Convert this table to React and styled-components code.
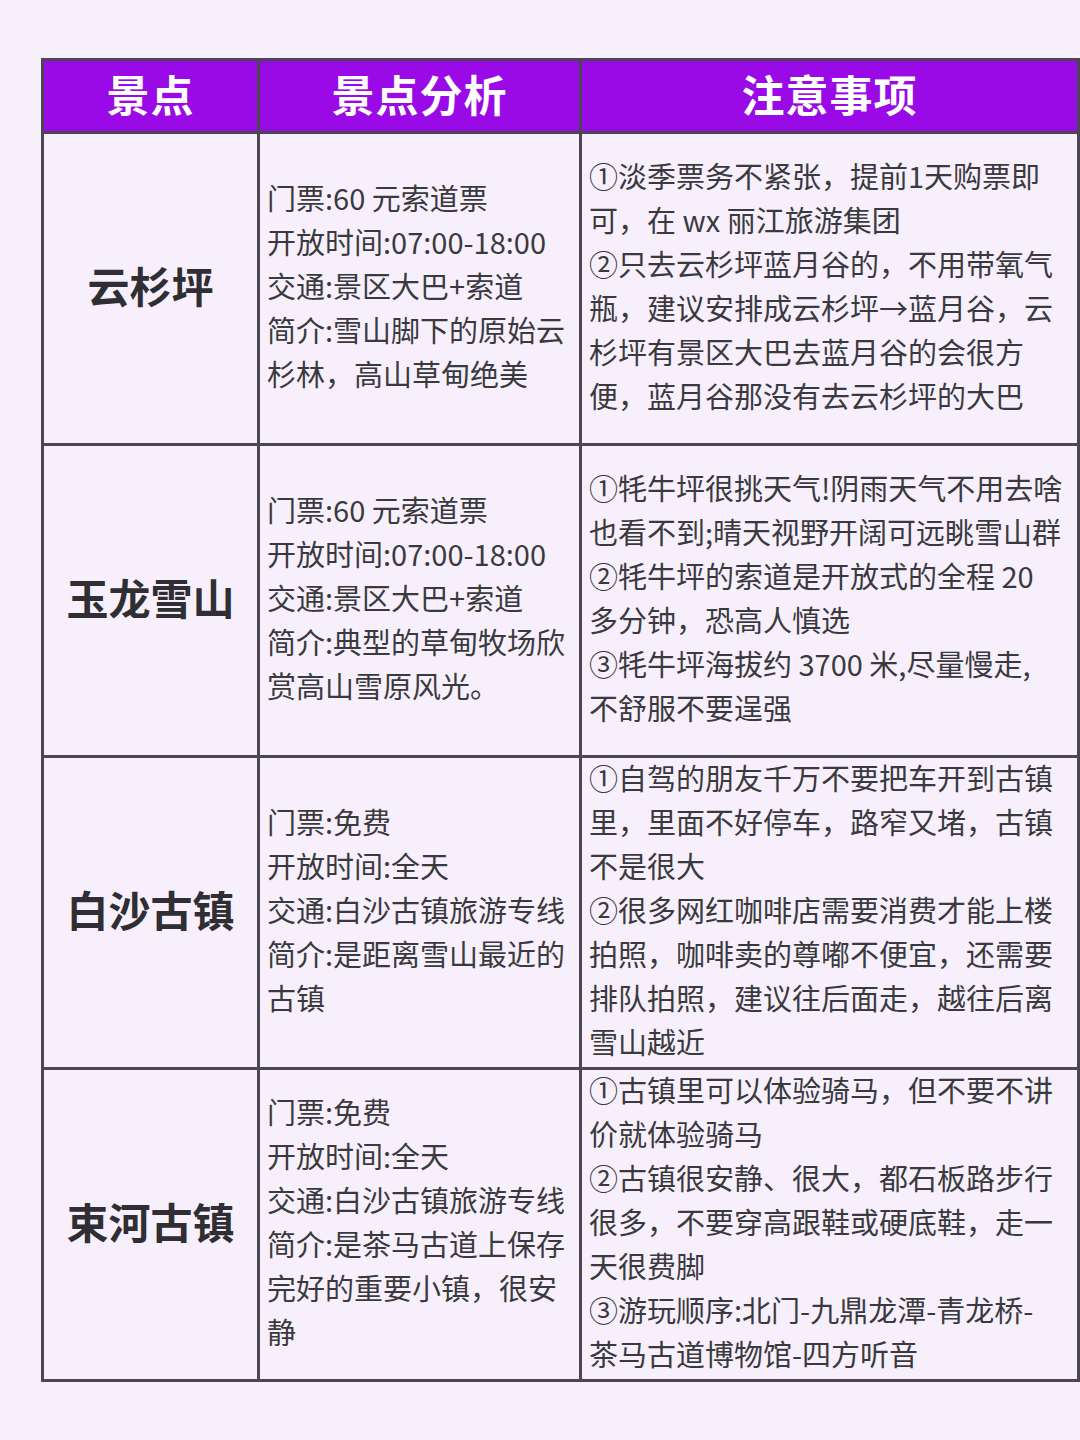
import React from "react";
import styled, { createGlobalStyle } from "styled-components";

const Global = createGlobalStyle`
  html, body { margin: 0; padding: 0; background: #f7f0fc; }
  body { font-family: "Noto Sans CJK SC", "Noto Sans", sans-serif; }
`;

const Page = styled.div`
  min-height: 1440px;
  padding: 58px 0 0 41px;
  box-sizing: border-box;
`;

const Table = styled.div`
  display: grid;
  grid-template-columns: 213px 319px 495px;
  grid-template-rows: 70px repeat(4, 309px);
  gap: 3px;
  padding: 3px;
  width: 1039px;
  box-sizing: border-box;
  background: #4b4652;
`;

const HeadCell = styled.div`
  background: #990ae6;
  color: #ffffff;
  font-size: 43px;
  font-weight: 700;
  display: flex;
  align-items: center;
  justify-content: center;
  letter-spacing: 1px;
  padding-bottom: 6px;
  box-sizing: border-box;
`;

const NameCell = styled.div`
  background: #f7f0fc;
  color: #2f2f33;
  font-size: 42px;
  font-weight: 700;
  display: flex;
  align-items: center;
  justify-content: center;
  padding-bottom: 8px;
  box-sizing: border-box;
`;

const TextCell = styled.div`
  background: #f7f0fc;
  color: #3a3a3e;
  font-size: 29px;
  line-height: 44px;
  display: flex;
  flex-direction: column;
  justify-content: center;
  padding: 0 0 8px 7px;
  box-sizing: border-box;
`;

const Line = styled.span`
  display: block;
  white-space: nowrap;
`;

const rows = [
  {
    name: "云杉坪",
    info: [
      "门票:60 元索道票",
      "开放时间:07:00-18:00",
      "交通:景区大巴+索道",
      "简介:雪山脚下的原始云",
      "杉林，高山草甸绝美",
    ],
    notes: [
      "①淡季票务不紧张，提前1天购票即",
      "可，在 wx 丽江旅游集团",
      "②只去云杉坪蓝月谷的，不用带氧气",
      "瓶，建议安排成云杉坪→蓝月谷，云",
      "杉坪有景区大巴去蓝月谷的会很方",
      "便，蓝月谷那没有去云杉坪的大巴",
    ],
  },
  {
    name: "玉龙雪山",
    info: [
      "门票:60 元索道票",
      "开放时间:07:00-18:00",
      "交通:景区大巴+索道",
      "简介:典型的草甸牧场欣",
      "赏高山雪原风光。",
    ],
    notes: [
      "①牦牛坪很挑天气!阴雨天气不用去啥",
      "也看不到;晴天视野开阔可远眺雪山群",
      "②牦牛坪的索道是开放式的全程 20",
      "多分钟，恐高人慎选",
      "③牦牛坪海拔约 3700 米,尽量慢走,",
      "不舒服不要逞强",
    ],
  },
  {
    name: "白沙古镇",
    info: [
      "门票:免费",
      "开放时间:全天",
      "交通:白沙古镇旅游专线",
      "简介:是距离雪山最近的",
      "古镇",
    ],
    notes: [
      "①自驾的朋友千万不要把车开到古镇",
      "里，里面不好停车，路窄又堵，古镇",
      "不是很大",
      "②很多网红咖啡店需要消费才能上楼",
      "拍照，咖啡卖的尊嘟不便宜，还需要",
      "排队拍照，建议往后面走，越往后离",
      "雪山越近",
    ],
  },
  {
    name: "束河古镇",
    info: [
      "门票:免费",
      "开放时间:全天",
      "交通:白沙古镇旅游专线",
      "简介:是茶马古道上保存",
      "完好的重要小镇，很安",
      "静",
    ],
    notes: [
      "①古镇里可以体验骑马，但不要不讲",
      "价就体验骑马",
      "②古镇很安静、很大，都石板路步行",
      "很多，不要穿高跟鞋或硬底鞋，走一",
      "天很费脚",
      "③游玩顺序:北门-九鼎龙潭-青龙桥-",
      "茶马古道博物馆-四方听音",
    ],
  },
];

export default function App() {
  return (
    <>
      <Global />
      <Page>
        <Table>
          <HeadCell>景点</HeadCell>
          <HeadCell>景点分析</HeadCell>
          <HeadCell>注意事项</HeadCell>
          {rows.map((r) => (
            <React.Fragment key={r.name}>
              <NameCell>{r.name}</NameCell>
              <TextCell>
                {r.info.map((l, i) => (
                  <Line key={i}>{l}</Line>
                ))}
              </TextCell>
              <TextCell>
                {r.notes.map((l, i) => (
                  <Line key={i}>{l}</Line>
                ))}
              </TextCell>
            </React.Fragment>
          ))}
        </Table>
      </Page>
    </>
  );
}
